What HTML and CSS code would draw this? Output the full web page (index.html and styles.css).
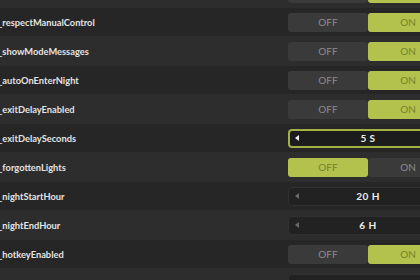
FILE: index.html
```html
<!DOCTYPE html>
<html lang="en">
  <head>
    <meta charset="UTF-8" />
    <title>Settings</title>
    <link rel="stylesheet" href="styles.css">
  </head>
  <body>
    <div class="settings">
      <div class="row tall">
        <span class="name">_enabled</span>
        <div class="toggle"><span class="seg">OFF</span><span class="seg on">ON</span></div>
      </div>
      <div class="row">
        <span class="name">_respectManualControl</span>
        <div class="toggle"><span class="seg">OFF</span><span class="seg on">ON</span></div>
      </div>
      <div class="row tall">
        <span class="name">_showModeMessages</span>
        <div class="toggle"><span class="seg">OFF</span><span class="seg on">ON</span></div>
      </div>
      <div class="row">
        <span class="name">_autoOnEnterNight</span>
        <div class="toggle"><span class="seg">OFF</span><span class="seg on">ON</span></div>
      </div>
      <div class="row tall">
        <span class="name">_exitDelayEnabled</span>
        <div class="toggle"><span class="seg">OFF</span><span class="seg on">ON</span></div>
      </div>
      <div class="row">
        <span class="name">_exitDelaySeconds</span>
        <div class="stepper focused"><span class="arrow"></span><span class="value">5 S</span></div>
      </div>
      <div class="row tall">
        <span class="name">_forgottenLights</span>
        <div class="toggle"><span class="seg on">OFF</span><span class="seg">ON</span></div>
      </div>
      <div class="row">
        <span class="name">_nightStartHour</span>
        <div class="stepper"><span class="arrow"></span><span class="value">20 H</span></div>
      </div>
      <div class="row tall">
        <span class="name">_nightEndHour</span>
        <div class="stepper"><span class="arrow"></span><span class="value">6 H</span></div>
      </div>
      <div class="row">
        <span class="name">_hotkeyEnabled</span>
        <div class="toggle"><span class="seg">OFF</span><span class="seg on">ON</span></div>
      </div>
      <div class="row tall">
        <span class="name">_hotkeyCode</span>
        <div class="stepper"><span class="arrow"></span><span class="value">F8</span></div>
      </div>
    </div>
  </body>
</html>
```

FILE: styles.css
```css
html,
body {
  margin: 0;
  height: 100%;
  overflow: hidden;
  background: #262626;
}
.settings {
  margin-top: -22px;
  font-family: Lato, "Open Sans", sans-serif;
}
.row {
  display: grid;
  grid-template-columns: 288px 160px;
  align-items: center;
  height: 28px;
  background: #262626;
}
.row.tall {
  height: 30px;
  background: #2d2d2d;
}
.name {
  margin-left: -2px;
  color: #e3e3e3;
  font-size: 9.3px;
  font-weight: 700;
}
.toggle {
  display: flex;
  height: 19px;
}
.seg {
  flex: 1;
  display: flex;
  align-items: center;
  justify-content: center;
  border-radius: 3px;
  background: #3a3a3a;
  color: #8c8c8c;
  font-size: 10px;
}
.seg.on {
  background: #b3c14d;
  color: #76822e;
}
.stepper {
  position: relative;
  box-sizing: border-box;
  display: flex;
  align-items: center;
  justify-content: center;
  height: 19px;
  border: 1px solid #303030;
  border-radius: 4px;
  background: #222222;
}
.stepper.focused {
  border: 2px solid #a3b043;
  background: #1c1c1c;
}
.arrow {
  position: absolute;
  left: 6px;
  top: 50%;
  margin-top: -3px;
  border-style: solid;
  border-width: 3px 4px 3px 0;
  border-color: transparent #6a6a6a transparent transparent;
}
.focused .arrow {
  left: 5px;
  border-right-color: #f0f0f0;
}
.value {
  color: #eeeeee;
  font-size: 10px;
  font-weight: 700;
  letter-spacing: 0.5px;
}
```
